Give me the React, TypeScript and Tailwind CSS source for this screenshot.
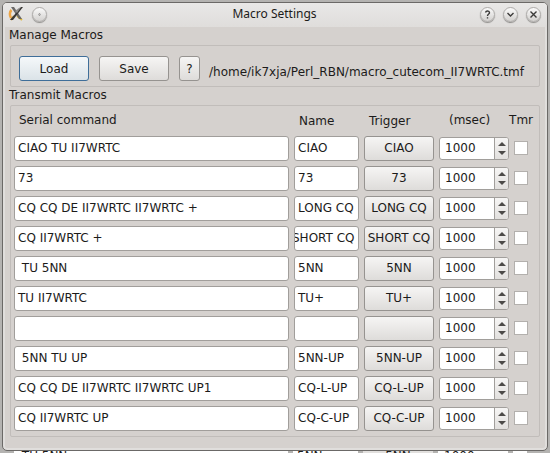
import { useEffect, useRef, useState } from "react";
import clsx from "clsx";

interface Macro {
    command: string,
    name: string,
    delay: number,
    timer: boolean
}

const initialMacros: Macro[] = [
    { command: "CIAO TU II7WRTC", name: "CIAO", delay: 1000, timer: false },
    { command: "73", name: "73", delay: 1000, timer: false },
    { command: "CQ CQ DE II7WRTC II7WRTC +", name: "LONG CQ", delay: 1000, timer: false },
    { command: "CQ II7WRTC +", name: "SHORT CQ", delay: 1000, timer: false },
    { command: " TU 5NN", name: "5NN", delay: 1000, timer: false },
    { command: "TU II7WRTC", name: "TU+", delay: 1000, timer: false },
    { command: "", name: "", delay: 1000, timer: false },
    { command: " 5NN TU UP", name: "5NN-UP", delay: 1000, timer: false },
    { command: "CQ CQ DE II7WRTC II7WRTC UP1", name: "CQ-L-UP", delay: 1000, timer: false },
    { command: "CQ II7WRTC UP", name: "CQ-C-UP", delay: 1000, timer: false },
]

const buttonClass = "rounded-[3px] border border-[#969390] bg-linear-to-b from-[#f6f5f4] to-[#dedcda]"

function AppIcon() {
    return (
        <svg width="16" height="16" viewBox="0 0 16 16" aria-hidden="true">
            <path d="M3.5 4C1.5 6 1.5 9 3 12" fill="none" stroke="#eda545" strokeWidth="2.5" />
            <path d="M9 10l5 4" stroke="#dfb93f" strokeWidth="2" />
            <path d="M3 14l3-4" stroke="#b98a2e" strokeWidth="2" />
            <path d="M3 1h3l8 12h-3z" fill="#6b6967" />
            <path d="M13 1h2L5 14H2z" fill="#3a3835" />
            <path d="M11 2l2-1-4 6-2-2z" fill="#8b8987" />
        </svg>
    )
}

function TitleButton({ label, children }: { label: string, children: React.ReactNode }) {
    return (
        <button
            type="button"
            aria-label={label}
            className="flex size-[15px] items-center justify-center rounded-full border border-[#aeacaa] bg-linear-to-b from-[#fafafa] to-[#d3d1cf] shadow-[0_1px_1px_#8f8d8b]"
        >
            <svg width="11" height="11" viewBox="0 0 11 11" fill="none" stroke="#3c3b3a" strokeWidth="1.4">
                {children}
            </svg>
        </button>
    )
}

function TextField({ value, label, onChange }: { value: string, label: string, onChange: (value: string) => void }) {
    const inputRef = useRef<HTMLInputElement>(null)

    // text that is too long for the field shows its end
    useEffect(() => {
        if (inputRef.current) inputRef.current.scrollLeft = inputRef.current.scrollWidth
    }, [])

    return (
        <input
            ref={inputRef}
            type="text"
            aria-label={label}
            className="block h-[25px] w-full rounded-[3px] border border-[#a19e9b] bg-white pr-[3px] indent-[3px] outline-none"
            value={value}
            onChange={(e) => onChange(e.target.value)}
        />
    )
}

function DelayInput({ value, label, onChange }: { value: number, label: string, onChange: (value: number) => void }) {
    return (
        <div className="flex h-[23px] overflow-hidden rounded-[3px] border border-[#a19e9b] bg-white">
            <input
                type="text"
                inputMode="numeric"
                aria-label={label}
                className="w-0 flex-1 pl-[5px] outline-none"
                value={value}
                onChange={(e) => onChange(Number(e.target.value) || 0)}
            />
            <div className="flex w-3.5 flex-col border-l border-[#a19e9b] bg-linear-to-b from-[#f6f5f4] to-[#e2e0de]">
                <button type="button" aria-label={`Increase ${label}`} className="flex flex-1 items-end justify-center pb-[2px]" onClick={() => onChange(value + 1)}>
                    <svg width="8" height="4" viewBox="0 0 8 4"><path d="M0 4L4 0L8 4z" fill="#4c4a48" /></svg>
                </button>
                <button type="button" aria-label={`Decrease ${label}`} className="flex flex-1 items-start justify-center pt-[3px]" onClick={() => onChange(Math.max(0, value - 1))}>
                    <svg width="8" height="4" viewBox="0 0 8 4"><path d="M0 0L4 4L8 0z" fill="#4c4a48" /></svg>
                </button>
            </div>
        </div>
    )
}

// top edge of the window that lies behind this one
function WindowBehind() {
    return (
        <div aria-hidden="true" className="flex min-h-0 flex-1 gap-[5px] overflow-hidden pr-[21px] pl-[12px] leading-[10px] whitespace-pre">
            <div className="flex-1 bg-white pl-[4px]"> TU 5NN</div>
            <div className="w-[65px] bg-white pl-[4px]">5NN</div>
            <div className="w-[70px] bg-[#e2e0de] text-center">5NN</div>
            <div className="w-[70px] bg-white pl-[6px]">1000</div>
            <div className="w-3.5 bg-white" />
        </div>
    )
}

export default function App() {
    const [macros, setMacros] = useState<Macro[]>(initialMacros)

    const updateMacro = (index: number, changes: Partial<Macro>) => {
        setMacros((prev) => prev.map((macro, i) => (i === index ? { ...macro, ...changes } : macro)))
    }

    return (
        <div className="flex h-screen flex-col overflow-hidden bg-[#b4b3b1] px-[2px] pt-[2px] font-['DejaVu_Sans',sans-serif] text-[12px] leading-4 text-[#1c1b1a]">
            <main className="shrink-0 rounded-[5px] border border-[#6b6967] bg-[#d5d1ce] pb-[13px] shadow-[inset_0_0_0_2px_#e0dedc]">
                <header className="flex h-6 items-center rounded-t-[4px] bg-linear-to-b from-[#e9e8e7] to-[#dfdddb] pr-[6px] pb-[2px] pl-[5px]">
                    <div className="flex flex-1 items-center gap-2">
                        <AppIcon />
                        <TitleButton label="Window menu">
                            <circle cx="5.5" cy="5.5" r="0.2" />
                        </TitleButton>
                    </div>
                    <h1 className="font-['Noto_Sans',sans-serif]">Macro Settings</h1>
                    <div className="flex flex-1 justify-end gap-2">
                        <TitleButton label="Help">
                            <path d="M3.5 3.5C4 1.5 7.5 1.5 7.5 3.7C7.5 5 5.5 5 5.5 7M5.5 8.3V9.6" />
                        </TitleButton>
                        <TitleButton label="Minimize">
                            <path d="M2.5 4l3 3l3-3" />
                        </TitleButton>
                        <TitleButton label="Close">
                            <path d="M2.5 2.5l6 6M8.5 2.5l-6 6" />
                        </TitleButton>
                    </div>
                </header>

                <section className="px-[6px]">
                    <h2 className="pb-[2px]">Manage Macros</h2>
                    <div className="mx-px flex h-[42px] items-center rounded-[2px] border border-[#c1bdba] pt-[5px] pl-[8px]">
                        <button type="button" className="h-[25px] w-[70px] rounded-[3px] border border-[#3f6e99] bg-linear-to-b from-[#f5f8fa] to-[#dbe3e8]">Load</button>
                        <button type="button" className={clsx(buttonClass, "ml-[10px] h-[25px] w-[70px]")}>Save</button>
                        <button type="button" aria-label="Macro help" className={clsx(buttonClass, "ml-[10px] h-[25px] w-[21px]")}>?</button>
                        <p className="ml-[9px] pt-[6px] whitespace-nowrap">/home/ik7xja/Perl_RBN/macro_cutecom_II7WRTC.tmf</p>
                    </div>
                </section>

                <section className="px-[6px]">
                    <h2 className="pb-[2px]">Transmit Macros</h2>
                    <div className="mx-px rounded-[2px] border border-[#c1bdba] pr-[10px] pb-[3px] pl-[3px]">
                        <table className="w-full table-fixed border-collapse">
                            <colgroup>
                                <col />
                                <col className="w-[70px]" />
                                <col className="w-[75px]" />
                                <col className="w-[75px]" />
                                <col className="w-[15px]" />
                            </colgroup>
                            <thead>
                                <tr className="h-[27px] text-left whitespace-nowrap">
                                    <th className="pl-[5px] font-normal">Serial command</th>
                                    <th className="pt-[2px] pl-[5px] font-normal">Name</th>
                                    <th className="pt-[2px] pl-[5px] font-normal">Trigger</th>
                                    <th className="pl-[10px] font-normal">(msec)</th>
                                    <th className="font-normal"><span className="float-right -mr-1">Tmr</span></th>
                                </tr>
                            </thead>
                            <tbody>
                                {macros.map((macro, i) => (
                                    <tr key={i} className="h-[30px]">
                                        <td className="pr-[5px]">
                                            <TextField
                                                label={`Serial command ${i + 1}`}
                                                value={macro.command}
                                                onChange={(command) => updateMacro(i, { command })}
                                            />
                                        </td>
                                        <td className="pr-[5px]">
                                            <TextField
                                                label={`Name ${i + 1}`}
                                                value={macro.name}
                                                onChange={(name) => updateMacro(i, { name })}
                                            />
                                        </td>
                                        <td className="pr-[5px]">
                                            <button type="button" aria-label={`Trigger ${i + 1}`} className={clsx(buttonClass, "block h-[25px] w-full whitespace-nowrap")}>
                                                {macro.name}
                                            </button>
                                        </td>
                                        <td className="pr-[5px]">
                                            <DelayInput
                                                label={`delay ${i + 1}`}
                                                value={macro.delay}
                                                onChange={(delay) => updateMacro(i, { delay })}
                                            />
                                        </td>
                                        <td>
                                            <input
                                                type="checkbox"
                                                aria-label={`Timer ${i + 1}`}
                                                className="block size-3.5 appearance-none border border-[#b3b0ad] bg-white checked:bg-[#4c4a48]"
                                                checked={macro.timer}
                                                onChange={(e) => updateMacro(i, { timer: e.target.checked })}
                                            />
                                        </td>
                                    </tr>
                                ))}
                            </tbody>
                        </table>
                    </div>
                </section>
            </main>
            <WindowBehind />
        </div>
    )
}
